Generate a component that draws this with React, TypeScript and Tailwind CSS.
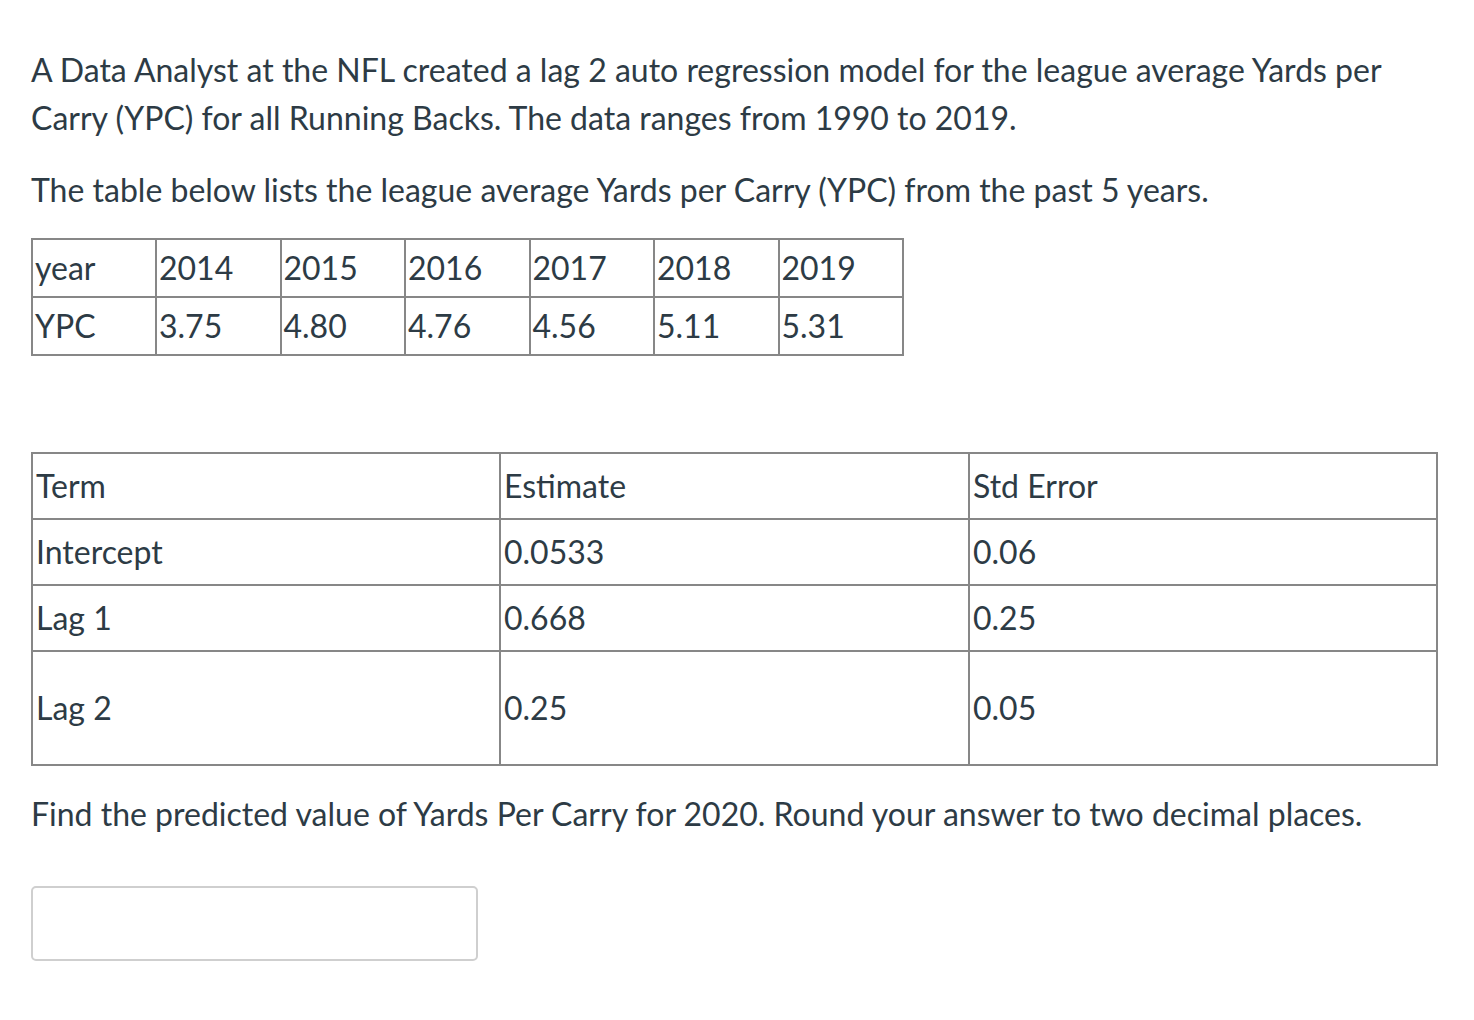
import React from "react";

const years = ["2014", "2015", "2016", "2017", "2018", "2019"];
const ypc = ["3.75", "4.80", "4.76", "4.56", "5.11", "5.31"];

const rows = [
  { term: "Intercept", est: "0.0533", se: "0.06", h: "h-[66px]" },
  { term: "Lag 1", est: "0.668", se: "0.25", h: "h-[66px]" },
  { term: "Lag 2", est: "0.25", se: "0.05", h: "h-[114px]" },
];

export default function App() {
  return (
    <div
      className="min-h-[1020px] bg-white text-[#2d3b45] text-[32px] leading-[48px] pl-[31px] pr-[30px] pt-[46px]"
      style={{ fontFamily: "Lato, 'Noto Sans', sans-serif" }}
    >
      <p className="mb-[24px]">
        A Data Analyst at the NFL created a lag 2 auto regression model for the league average Yards per
        Carry (YPC) for all Running Backs. The data ranges from 1990 to 2019.
      </p>
      <p className="mb-[24px]">The table below lists the league average Yards per Carry (YPC) from the past 5 years.</p>

      <table className="border-collapse table-fixed w-[873px]">
        <tbody>
          <tr className="h-[58px]">
            <td className="border-2 border-[#878787] px-[2px] align-middle w-[124px]">year</td>
            {years.map((y) => (
              <td key={y} className="border-2 border-[#878787] px-[2px] align-middle">
                {y}
              </td>
            ))}
          </tr>
          <tr className="h-[58px]">
            <td className="border-2 border-[#878787] px-[2px] align-middle">YPC</td>
            {ypc.map((v, i) => (
              <td key={i} className="border-2 border-[#878787] px-[2px] align-middle">
                {v}
              </td>
            ))}
          </tr>
        </tbody>
      </table>

      <table className="border-collapse table-fixed w-[1407px] mt-[96px]">
        <tbody>
          <tr className="h-[66px]">
            <td className="border-2 border-[#878787] px-[3px] align-middle w-[468px]">Term</td>
            <td className="border-2 border-[#878787] px-[3px] align-middle w-[469px]">Estimate</td>
            <td className="border-2 border-[#878787] px-[3px] align-middle">Std Error</td>
          </tr>
          {rows.map((r) => (
            <tr key={r.term} className={r.h}>
              <td className="border-2 border-[#878787] px-[3px] align-middle">{r.term}</td>
              <td className="border-2 border-[#878787] px-[3px] align-middle">{r.est}</td>
              <td className="border-2 border-[#878787] px-[3px] align-middle">{r.se}</td>
            </tr>
          ))}
        </tbody>
      </table>

      <p className="mt-[24px]">Find the predicted value of Yards Per Carry for 2020. Round your answer to two decimal places.</p>

      <div className="mt-[48px]">
        <input
          type="text"
          aria-label="answer"
          className="w-[447px] h-[75px] border-2 border-[#cfcfcf] rounded-[5px] bg-white outline-none"
        />
      </div>
    </div>
  );
}
